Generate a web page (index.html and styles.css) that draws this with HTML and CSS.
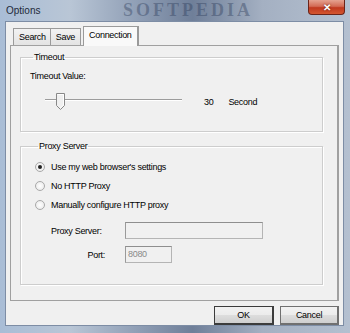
FILE: index.html
```html
<!DOCTYPE html>
<html>
<head>
<meta charset="utf-8">
<link rel="stylesheet" href="styles.css">
</head>
<body>
<div class="frame">
  <div class="titlebar">
    <span class="title">Options</span>
    <span class="watermark">SOFTPEDIA</span>
    <div class="close"><span>✕</span></div>
  </div>
  <div class="client">
    <div class="tabs">
      <div class="tab">Search</div>
      <div class="tab">Save</div>
      <div class="tab active">Connection</div>
    </div>
    <div class="panel">
      <fieldset class="group timeout">
        <legend>Timeout</legend>
        <div class="label">Timeout Value:</div>
        <div class="slider-row">
          <div class="slider">
            <div class="track"></div>
            <svg class="thumb" width="9" height="17" viewBox="0 0 9 17">
              <path d="M0.5 0.5 H8.5 V12.5 L4.5 16.5 L0.5 12.5 Z" fill="#f0f0f0" stroke="#888"/>
              <path d="M1.5 1.5 H7.5 V12 L4.5 15" fill="none" stroke="#fff"/>
            </svg>
          </div>
          <span class="value">30</span>
          <span class="unit">Second</span>
        </div>
      </fieldset>
      <fieldset class="group proxy">
        <legend>Proxy Server</legend>
        <label class="radio"><span class="dot checked"></span>Use my web browser's settings</label>
        <label class="radio"><span class="dot"></span>No HTTP Proxy</label>
        <label class="radio"><span class="dot"></span>Manually configure HTTP proxy</label>
        <div class="field first">
          <span class="flabel">Proxy Server:</span>
          <div class="input wide"></div>
        </div>
        <div class="field">
          <span class="flabel right">Port:</span>
          <div class="input narrow">8080</div>
        </div>
      </fieldset>
    </div>
    <div class="buttons">
      <div class="btn default">OK</div>
      <div class="btn">Cancel</div>
    </div>
  </div>
</div>
</body>
</html>
```
FILE: styles.css
```css
* { box-sizing: border-box; }
html, body { margin: 0; padding: 0; }
body {
  width: 350px; height: 333px; overflow: hidden;
  font-family: "Liberation Sans", Arial, sans-serif;
  font-size: 9px;
  letter-spacing: -0.3px;
  color: #000;
  background: #2c3e5c;
}
.frame {
  width: 350px; height: 333px;
  background: linear-gradient(90deg, #a9bdd6 0%, #b9c6d6 20%, #8e9db4 40%, #6f7f99 55%, #a4b0c2 75%, #b4c0d0 100%);
  padding: 0 6px 7px 5px;
  display: flex; flex-direction: column;
  position: relative;
}
.titlebar {
  height: 21px;
  position: relative;
  display: flex; align-items: center;
  padding-left: 1px;
}
.title { font-family: "Liberation Sans", sans-serif; font-size: 10px; letter-spacing: 0; color: #1e2a3a; position: relative; z-index: 1; }
.watermark {
  position: absolute; left: 118px; top: 0;
  font-family: "Liberation Serif", serif; font-weight: bold; font-size: 18px; line-height: 21px;
  letter-spacing: 3px; color: rgba(40,55,85,0.38);
}
.close {
  position: absolute; right: -1px; top: 0;
  width: 37px; height: 15px;
  border: 1px solid #6b2419; border-top: none;
  border-radius: 0 0 4px 4px;
  background: linear-gradient(#e5a290 0%, #d36b55 45%, #c0391f 55%, #d4562f 100%);
  display: flex; align-items: center; justify-content: center;
}
.close span { color: #fff; font-size: 10px; font-weight: bold; text-shadow: 0 0 2px #5a1a10; }
.client {
  flex: 1;
  background: #f0f0f0;
  border: 1px solid #7d8da5;
  display: flex; flex-direction: column;
  padding: 4px 4px 0 4px;
}
.tabs { display: flex; align-items: flex-end; height: 19px; padding-left: 3px; position: relative; z-index: 1; }
.tab {
  height: 17px; padding: 0 4px;
  display: flex; align-items: center;
  border: 1px solid #9a9a9a; border-bottom: none; border-right: none;
  background: linear-gradient(#f2f2f2, #e3e3e3);
}
.tab:first-child { padding: 0 4px 0 5px; }
.tab:nth-child(2) { border-right: 1px solid #9a9a9a; padding: 0 5px; }
.tab.active {
  height: 20px; margin-left: 2px; padding: 0 5px;
  background: #f9f9f9;
  border: 1px solid #9a9a9a; border-bottom: none;
  border-right: 2px solid #9a9a9a;
  margin-bottom: -1px;
  align-items: flex-start; padding-top: 3px;
}
.panel {
  height: 256px;
  border: 1px solid #a0a0a0;
  border-right: 2px solid #a0a0a0;
  background: #f0f0f0;
  padding: 6px 14px 0 9px;
}
.group {
  margin: 0; border: 1px solid #cdcdcd;
  box-shadow: inset 1px 1px 0 #fff, 1px 1px 0 #fff;
  padding: 0;
}
.group legend { padding: 0 1px; margin-left: 3px; line-height: 10px; }
.timeout { height: 80px; padding: 9px 0 0 9px; }
.label { line-height: 11px; }
.slider-row { display: flex; align-items: center; margin-top: 11px; height: 17px; }
.slider { position: relative; width: 137px; height: 17px; margin-left: 15px; }
.track { position: absolute; left: 0; right: 0; top: 6px; height: 2px; border-top: 1px solid #9c9c9c; border-bottom: 1px solid #fff; }
.thumb { position: absolute; left: 11px; top: 0; }
.value { margin-left: 22px; }
.unit { margin-left: 15px; }
.proxy { height: 144px; margin-top: 9px; padding: 6px 0 0 14px; }
.radio { display: flex; align-items: center; height: 19px; }
.dot {
  width: 10px; height: 10px; border-radius: 50%;
  border: 1px solid #a9a9a9;
  background: radial-gradient(#ffffff, #e6e6e6);
  margin-right: 6px; position: relative;
}
.dot.checked::after {
  content: ""; position: absolute; left: 2px; top: 2px; width: 4px; height: 4px; border-radius: 50%; background: #222;
}
.field { display: flex; align-items: center; margin-top: 7px; height: 17px; }
.field.first { margin-top: 8px; }
.flabel { width: 90px; padding-left: 16px; }
.flabel.right { text-align: right; padding-right: 20px; }
.input {
  height: 17px; border: 1px solid #b4b4b4; border-top-color: #8e8e8e; border-left-color: #9a9a9a;
  background: #f0f0f0; color: #8a8a8a; padding: 1px 2px; line-height: 13px;
}
.input.wide { width: 138px; }
.input.narrow { width: 47px; }
.buttons { display: flex; justify-content: flex-end; gap: 6px; padding-top: 5px; }
.btn {
  width: 60px; height: 19px;
  border: 1px solid #707070;
  border-right-width: 2px; border-bottom-width: 2px;
  background: linear-gradient(#f2f2f2 0%, #ebebeb 50%, #dddddd 51%, #cfcfcf 100%);
  display: flex; align-items: center; justify-content: center;
}
.btn.default { border-color: #3c3c3c; }
.btn:last-child { width: 59px; }
```
